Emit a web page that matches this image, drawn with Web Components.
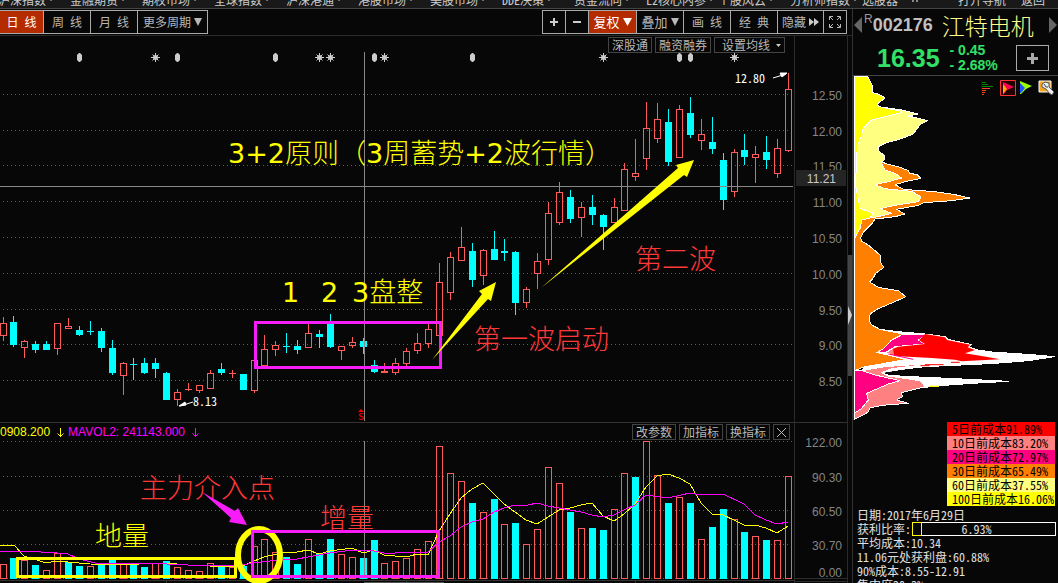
<!DOCTYPE html>
<html lang="zh-CN">
<head>
<meta charset="utf-8">
<title>江特电机 002176</title>
<style>
  html, body { margin: 0; height: 100%; background: #070707; }
  body { font: 12px/14px "Noto Sans CJK SC", "Liberation Sans", sans-serif; font-feature-settings: "hwid"; color: #aaa; overflow: hidden; }
</style>
</head>
<body>
<stock-app></stock-app>
<script>
const define = (name, markup, ready) => customElements.define(name, class extends HTMLElement {
  connectedCallback() {
    if (this.shadowRoot) return;
    const t = document.createElement('template');
    t.innerHTML = markup;
    this.attachShadow({ mode: 'open' }).append(t.content.cloneNode(true));
    if (ready) ready(this.shadowRoot, this);
  }
});
const UP = '#ff5b5b', DOWN = '#00ffff';

/* x, kind, high, body top, body bottom, low, volume kind, volume top */
const BARS = [
[3,'r',317,323,336,341,'r',564],[13,'c',316,322,345,347,'c',558],[24,'r',340,341,348,358,'r',560],[35,'c',341,344,350,353,'c',565],
[46,'c',341,344,350,350,'r',570],[57,'r',323,323,349,355,'r',553],[68,'r',318,326,329,329,'c',562],[79,'c',326,330,335,336,'c',566],
[90,'c',321,331,332,335,'r',566],[101,'c',328,331,348,352,'c',563],[112,'c',340,348,373,375,'c',560],[123,'r',362,363,376,395,'r',564],
[133,'c',358,364,365,380,'c',564],[144,'c',358,363,373,374,'c',567],[155,'c',358,363,369,378,'r',563],[166,'c',372,373,400,400,'c',561],
[177,'r',389,392,400,406,'r',567],[188,'r',383,389,390,391,'r',570],[199,'r',385,385,391,393,'r',571],[210,'r',370,373,389,389,'r',563],
[221,'c',363,369,373,375,'c',566],[232,'r',370,373,374,378,'r',567],[243,'c',374,374,390,390,'c',566],[254,'r',360,360,391,393,'r',546],
[264,'r',335,349,366,366,'r',539],[275,'r',341,345,350,356,'r',552],[286,'c',333,346,347,353,'c',557],[297,'c',340,346,350,354,'c',564],
[308,'r',323,333,348,348,'r',539],[319,'c',330,334,337,348,'c',554],[330,'c',314,323,347,348,'c',539],[341,'r',346,346,351,360,'r',554],
[352,'r',337,342,346,348,'r',557],[363,'c',338,341,347,354,'c',558],[374,'c',360,365,372,373,'c',540],[384,'r',363,371,373,373,'r',563],
[395,'r',358,363,373,375,'r',561],[406,'r',348,351,364,367,'r',558],[417,'r',333,343,351,354,'r',549],[428,'r',323,329,344,348,'r',541],
[439,'r',263,282,336,336,'r',446],[450,'r',252,257,293,300,'r',473],[461,'r',227,247,261,261,'r',481],[472,'c',243,251,280,287,'c',503],
[483,'r',249,250,276,285,'r',512],[494,'c',231,249,260,260,'c',499],[504,'c',239,251,253,261,'r',524],[515,'c',251,252,303,315,'c',523],
[526,'r',287,289,303,308,'r',544],[537,'r',253,261,274,289,'r',529],[548,'r',202,213,260,265,'r',467],[559,'r',182,192,223,225,'r',483],
[570,'c',190,197,219,223,'c',512],[581,'r',202,207,218,237,'r',528],[592,'c',195,207,215,225,'c',528],[603,'c',214,215,227,250,'c',530],
[614,'r',198,207,223,223,'r',509],[624,'r',163,169,211,211,'r',473],[635,'r',139,173,177,181,'c',477],[646,'r',102,128,159,170,'r',441],
[657,'r',103,119,139,143,'r',475],[668,'c',109,122,162,166,'c',503],[679,'r',105,109,158,158,'r',497],[690,'c',97,113,135,138,'c',503],
[701,'r',119,134,141,150,'r',539],[712,'c',117,142,149,154,'c',527],[723,'c',153,160,200,210,'c',509],[734,'r',149,152,192,197,'r',519],
[744,'c',134,150,157,165,'c',532],[755,'r',146,154,158,183,'r',536],[766,'c',136,152,160,169,'c',540],[777,'r',139,148,174,178,'r',540],
[788,'r',73,89,151,152,'r',476]];

const box = (x, kind, top, bottom) => kind === 'c' || bottom - top < 3
  ? `<rect x="${x - 3}" y="${top}" width="7" height="${Math.max(1, bottom - top)}" fill="${kind === 'c' ? DOWN : UP}"/>`
  : `<rect x="${x - 2.5}" y="${top + .5}" width="6" height="${bottom - top - 1}" fill="none" stroke="${UP}"/>`;
const wick = (x, a, b, kind) => b > a ? `<rect x="${x}" y="${a}" width="1" height="${b - a}" fill="${kind === 'c' ? DOWN : UP}"/>` : '';
const grid = ys => ys.map(y => `<path d="M3 ${y}.5H793" stroke="#5c5c5c" stroke-dasharray="1 3"/>`).join('');
const star = x => `<g stroke="#ccc"><circle cx="${x + .5}" cy="57.5" r="2.5" fill="#ccc" stroke="none"/><path d="M${x - 4} 57.5h9M${x + .5} 53v9M${x - 2.5} 54.5l6 6M${x + 3.5} 54.5l-6 6"/></g>`;
const pill = x => `<path d="M${x} 53h1l2 2v5l-2 2h-1l-2-2v-5z" fill="#ccc"/>`;

define('price-chart', `<style>
  :host { display: block; position: relative; min-width: 0; min-height: 0; }
  svg { display: block; width: 100%; height: 100%; }
  .note { font: 300 27px "DejaVu Sans", "Noto Sans CJK SC", sans-serif; }
  .note tspan { font-weight: 400; }
  .tags { position: absolute; top: 1px; right: 9px; display: flex; gap: 3px; }
  .mark { font-size: 12px; fill: #fff; }
</style>
<svg viewBox="0 36 794 386" preserveAspectRatio="xMaxYMin meet" role="img" aria-label="K线图">
  <g shape-rendering="crispEdges">${grid([94,130,165,201,237,273,309,344,380])}</g>
  <g shape-rendering="crispEdges" id="bars"></g>
  <g id="marks"></g>
  <path d="M0 186.5H793M364.5 52V421" stroke="#888" shape-rendering="crispEdges"/>
  <rect x="255.5" y="322.5" width="185" height="45" fill="none" stroke="#f81cf8" stroke-width="3"/>
  <g fill="#ff0"><path d="M432 360L482 294 479 291 496 282 491 301 488 299z"/><path d="M541 288L678 168 676 165 694 160 687 177 684 175z"/></g>
  <g class="note" fill="#ff0"><text x="228" y="163"><tspan>3+2</tspan>原则（<tspan>3</tspan>周蓄势<tspan>+2</tspan>波行情）</text><text x="282" y="302"><tspan>1</tspan></text><text x="321" y="302"><tspan>2</tspan></text><text x="352" y="302"><tspan>3</tspan>盘整</text></g>
  <g class="note" fill="#ff3838"><text x="474" y="349">第一波启动</text><text x="635" y="269">第二波</text></g>
  <text class="mark" x="193" y="406">8.13</text><path d="M193 402l-13 4M179 406l6-4 1 3z" stroke="#fff" fill="#fff"/>
  <text class="mark" x="735" y="83">12.80</text><path d="M773 78l13-4M787 73l-7 0 2 4z" stroke="#fff" fill="#fff"/>
  <text x="358" y="420" font-size="12" fill="#f00">s</text><path d="M358 412l3-3 3 3z" fill="#f00"/>
</svg>
<div class="tags"><flat-button>深股通</flat-button><flat-button>融资融券</flat-button><flat-button caret>设置均线</flat-button></div>`, root => {
  root.getElementById('bars').innerHTML = BARS.map(([x, k, h, t, b, l]) => wick(x, h, t, k) + wick(x, b, l, k) + box(x, k, t, b)).join('');
  root.getElementById('marks').innerHTML = [79,177,275,374,472,679,690].map(pill).join('') + [155,319,330,384,603,734].map(star).join('');
});

define('volume-chart', `<style>
  :host { display: block; position: relative; min-width: 0; border-top: 1px solid #333; }
  svg.plot { display: block; width: 100%; height: 160px; }
  .bar { position: absolute; top: 1px; left: 0; right: 4px; display: flex; gap: 3px; }
  .values { flex: 1; display: flex; gap: 4px; font: 12px/16px "Liberation Sans", sans-serif; white-space: nowrap; }
  .a { color: #ff0; } .b { color: #f0f; }
  .values svg { flex: none; width: 7px; height: 16px; margin-left: 3px; }
  .note { font: 300 27px "Noto Sans CJK SC", sans-serif; }
</style>
<svg class="plot" viewBox="0 423 794 160" preserveAspectRatio="xMaxYMin meet" role="img" aria-label="成交量">
  <g shape-rendering="crispEdges">${grid([441,476,510,544,578])}</g>
  <g shape-rendering="crispEdges" id="bars"></g>
  <path d="M364.5 441V578" stroke="#888" shape-rendering="crispEdges"/>
  <path d="M0 580.5H794M166.5 581v2M406.5 581v2M635.5 581v2" stroke="#333"/><path d="M364 582.5h80" stroke="#555"/>
  <g fill="none" shape-rendering="crispEdges">
  <polyline stroke="#ff0" points="0,545 14,545 24,556 46,563 57,561 68,562 90,564 128,565 150,563 165,563 188,565 210,566 232,567 243,566 254,561 264,557 286,552 297,552 308,550 319,554 330,551 352,548 363,553 374,550 384,555 395,556 410,556 417,554 428,555 439,531 450,514 461,498 472,489 483,483 494,494 504,504 515,512 526,520 537,524 548,517 559,510 570,508 581,505 592,503 603,516 614,521 624,514 635,504 646,487 657,476 668,474 679,478 690,484 701,503 712,514 723,515 734,520 744,525 755,525 766,528 777,533 788,526"/>
  <polyline stroke="#f0f" points="0,552 24,551 57,553 68,554 79,559 95,563 145,563 188,565 210,565 235,566 254,563 286,559 297,559 308,557 330,553 352,550 374,551 384,553 395,553 406,552 417,553 428,552 439,542 450,536 461,527 472,522 483,519 494,512 504,508 515,505 528,505 537,503 548,506 559,508 570,510 581,512 592,515 603,517 614,515 624,510 635,505 646,495 668,498 690,493 701,495 723,494 744,504 755,515 766,520 777,524 788,522"/></g>
  <g class="note" fill="#ff3838"><text x="140" y="498">主力介入点</text><text x="320" y="528">增量</text></g>
  <text class="note" fill="#ff0" x="95" y="546">地量</text>
  <rect x="17.5" y="558.5" width="218" height="18" fill="none" stroke="#ff0" stroke-width="3"/>
  <ellipse cx="259" cy="555" rx="21" ry="26" fill="none" stroke="#ff0" stroke-width="6"/>
  <rect x="252.5" y="531.5" width="186" height="45" fill="none" stroke="#f81cf8" stroke-width="3"/>
  <path d="M202 492L235 511 238 508 247 525 229 522 231 518z" fill="#f81cf8"/>
</svg>
<div class="bar">
  <div class="values"><span class="a">0908.200</span><svg viewBox="0 0 7 16"><path d="M3.5 4v9M.5 9.5l3 3 3-3" fill="none" stroke="#ff0"/></svg>
  <span class="b">MAVOL2: 241143.000</span><svg viewBox="0 0 7 16"><path d="M3.5 4v9M.5 9.5l3 3 3-3" fill="none" stroke="#f0f"/></svg></div>
  <flat-button>改参数</flat-button><flat-button>加指标</flat-button><flat-button>换指标</flat-button><flat-button close></flat-button>
</div>`, root => {
  root.getElementById('bars').innerHTML = BARS.map(b => box(b[0], b[6], b[7], 579)).join('');
});

define('flat-button', `<style>
  :host { display: block; }
  button { display: flex; align-items: center; gap: 6px; box-sizing: border-box; height: 16px; margin: 0; padding: 0 3px; border: 1px solid #444; background: #070707; color: #b8b8b8; font: inherit; font-feature-settings: inherit; line-height: 14px; white-space: nowrap; }
  :host([close]) button { padding: 0 2px; }
  :host([caret]) button { padding: 0 3px 0 7px; }
</style><button type="button"><slot></slot></button>`, (root, host) => {
  const b = root.querySelector('button');
  if (host.hasAttribute('close')) { b.setAttribute('aria-label', '关闭'); b.innerHTML = '<svg width="11" height="11" viewBox="0 0 11 11"><path d="M1 1l9 9M10 1l-9 9" stroke="#b8b8b8"/></svg>'; }
  if (host.hasAttribute('caret')) b.insertAdjacentHTML('beforeend', '<svg width="5" height="3" viewBox="0 0 5 3"><path d="M0 0h5L2.500 3z" fill="#ccc"/></svg>');
});

define('tool-button', `<style>
  :host { display: block; }
  button { display: flex; align-items: center; justify-content: center; gap: 3px; box-sizing: border-box; width: 100%; height: 24px; margin: 0; padding: 0; border: 1px solid #aaa; background: #070707; color: #b8b8b8; font: inherit; font-feature-settings: inherit; line-height: 18px; white-space: pre; }
  :host([active]) button { background: #b52b00; color: #fff; }
</style><button type="button"><slot></slot><slot name="icon"></slot></button>`, (root, host) => {
  if (host.hasAttribute('label')) root.querySelector('button').setAttribute('aria-label', host.getAttribute('label'));
});

define('tool-bar', `<style>
  :host { display: flex; justify-content: space-between; box-sizing: border-box; height: 27px; padding: 1px 6px 0 0; border-bottom: 1px solid #2c2c2c; }
  div { display: flex; }
  tool-button { width: 48px; margin-left: -1px; }
  .first { width: 45px; }
  .sm { width: 24px; } .lg { width: 71px; } .wide { width: 47px; }
  .big { font-size: 13px; } .adj { width: 49px; }
  svg { display: block; }
</style>
<div><tool-button class="first" active>日 线</tool-button><tool-button>周 线</tool-button><tool-button>月 线</tool-button><tool-button class="lg">更多周期<svg slot="icon" width="8" height="8"><path d="M0 0h8L4 8z" fill="#b8b8b8"/></svg></tool-button></div>
<div><tool-button class="sm" label="放大"><svg slot="icon" width="8" height="8"><path d="M4 0v8M0 4h8" stroke="#ccc" stroke-width="2"/></svg></tool-button>
<tool-button class="sm" label="缩小"><svg slot="icon" width="8" height="8"><path d="M0 4h8" stroke="#ccc" stroke-width="2"/></svg></tool-button>
<tool-button class="big adj" active>复权<svg slot="icon" width="9" height="8"><path d="M0 0h9L4.500 8z" fill="#fff"/></svg></tool-button>
<tool-button class="big">叠加<svg slot="icon" width="8" height="8"><path d="M0 0h8L4 8z" fill="#b8b8b8"/></svg></tool-button>
<tool-button>画 线</tool-button><tool-button>经 典</tool-button>
<tool-button class="wide">隐藏<svg slot="icon" width="10" height="8"><path d="M0 0l5 4-5 4zM5 0l5 4-5 4z" fill="#ccc"/></svg></tool-button>
<tool-button class="sm" label="全屏"><svg slot="icon" width="12" height="12"><path d="M.5 4V.5H4M8 .5h3.500V4M11.500 8v3.500H8M4 11.500H.5V8M1 1l3 3M11 1L8 4M11 11L8 8M1 11l3-3" fill="none" stroke="#bbb"/></svg></tool-button></div>`);

define('menu-bar', `<style>
  :host { display: flex; justify-content: space-between; align-items: flex-end; box-sizing: border-box; height: 9px; overflow: hidden; background: #191919; border-bottom: 1px solid #444; padding-bottom: 1px; }
  nav { display: flex; white-space: nowrap; margin-left: -2px; }
  nav.end { gap: 15px; margin-right: 13px; }
  nav.main a { width: 72px; }
  nav.main a::after { content: ""; display: inline-block; margin-left: 2px; vertical-align: 4px; border: 3px solid transparent; border-top-color: #ccc; border-bottom: 0; }
  nav.main a:last-of-type { width: 36px; }
  nav.main a:last-of-type::after { display: none; }
  a { color: #ccc; text-decoration: none; line-height: 14px; flex: none; }
  i { align-self: flex-start; margin: 6px 0 0 14px; width: 2px; height: 3px; background: #888; box-shadow: 4px 0 #888; }
</style>
<nav class="main"></nav><nav class="end"><a href="#nav">打开导航</a><a href="#back">返回</a></nav>`, root => {
  root.querySelector('.main').innerHTML = '沪深指数 金融期货 期权市场 全球指数 沪深港通 港股市场 美股市场 DDE决策 资金流向 L2核心内参 个股风云 分析师指数 选股器'.split(' ').map((t, i) => `<a href="#m${i}">${t}</a>`).join('');
  root.querySelector('.main').insertAdjacentHTML('beforeend', '<i></i>');
});

define('value-axis', `<style>
  :host { display: block; min-height: 0; border-left: 1px solid #2a2a2a; border-right: 1px solid #2a2a2a; }
  :host([framed]) { border-top: 1px solid #333; }
  svg { display: block; width: 100%; height: 100%; }
  text { font: 12px "Liberation Sans", sans-serif; text-anchor: end; fill: #858585; }
</style><svg preserveAspectRatio="xMinYMin meet"></svg>`, (root, host) => {
  const s = root.querySelector('svg'), top = +host.getAttribute('top');
  s.setAttribute('viewBox', `795 ${top} 52 ${host.getAttribute('span')}`);
  s.innerHTML = host.getAttribute('values').split(' ').map(v => { const [t, y] = v.split('@'); return `<text x="842" y="${+y + 5}">${t}</text>`; }).join('')
    + (host.hasAttribute('cursor') ? `<rect x="796" y="170" width="50" height="16" fill="#242424"/><text x="836" y="183" style="fill:#c8c8c8">${host.getAttribute('cursor')}</text>` : '<path d="M795 578.5h52M795 581.500h52" stroke="#2c2c2c"/>');
});

define('side-handle', `<style>
  :host { display: block; }
  svg { display: block; }
</style><svg width="5" height="547" viewBox="848 36 5 547"><rect x="848" y="255" width="5" height="121" fill="#444"/><path d="M848 306l4 9-4 10z" fill="#ccc"/></svg>`);

define('quote-head', `<style>
  :host { display: grid; grid-template-rows: 32px 34px; box-sizing: border-box; height: 67px; border-bottom: 1px solid #444; }
  .name { display: flex; align-items: center; padding: 0 1px; color: #c0c0c0; }
  .name svg { flex: none; }
  sup { font: 12px/12px "Liberation Sans", sans-serif; align-self: flex-start; margin: 4px 0 0 2px; color: #999; }
  .code { font: bold 18px/32px "Liberation Sans", sans-serif; }
  .title { flex: 1; margin-left: 9px; font-size: 23px; line-height: 32px; font-weight: 300; color: #ffff8c; }
  .price { display: flex; align-items: center; padding: 0 9px 0 24px; color: #33e066; font-family: "Liberation Sans", sans-serif; font-weight: bold; }
  .last { font-size: 25px; line-height: 32px; margin-right: 10px; }
  .delta { flex: 1; font-size: 14px; line-height: 15px; white-space: pre; font-feature-settings: normal; }
  .delta span { display: block; }
  button { width: 33px; height: 26px; padding: 0; border: 1px solid #aaa; background: #070707; display: grid; place-items: center; }
</style>
<div class="name"><svg width="8" height="16"><path d="M8 0v16L0 8z" fill="#666"/></svg><sup>R</sup><span class="code">002176</span><span class="title">江特电机</span><svg width="8" height="16"><path d="M0 0v16l8-8z" fill="#666"/></svg></div>
<div class="price"><span class="last">16.35</span><div class="delta"><span>- 0.45</span><span>- 2.68%</span></div><button type="button" aria-label="加自选"><svg width="11" height="11"><path d="M5.500 0v11M0 5.500h11" stroke="#aaa" stroke-width="3"/></svg></button></div>`);

define('chip-chart', `<style>
  :host { display: block; position: relative; }
  svg.plot { display: block; width: 100%; height: 344px; }
  .tools { position: absolute; top: 4px; right: 4px; display: flex; gap: 3px; }
  .tools button { width: 16px; height: 16px; padding: 0; border: 0; background: none; }
  .tools svg { display: block; }
</style>
<svg class="plot" viewBox="24 228 615 1032" preserveAspectRatio="xMinYMin meet" role="img" aria-label="筹码分布">
 <g stroke="#fff" stroke-width="3" stroke-linejoin="round" shape-rendering="crispEdges">
  <path fill="#ff8000" d="M28 484H108L125 492 165 502 190 512 195 520 216 524 228 535 185 544 150 554 175 568 270 575 330 584 374 594 320 602 235 608 220 616 155 628 165 634 180 642 150 650 90 657 80 672 55 696 47 712 50 724 70 735 105 765 108 790 117 802 92 820 84 835 74 846 100 862 160 872 182 890 150 905 95 928 76 942 72 960 80 975 105 988 150 1000 170 1040 180 1078 60 1100 28 1112z"/>
  <path fill="#ffff80" d="M28 325L102 320 170 330 220 342 190 348 248 362 225 374 205 402 170 416 125 428 100 440 102 454 118 466 118 480 108 486 120 510 150 520 170 534 130 545 90 554 120 566 200 574 228 590 220 605 150 616 105 626 120 632 140 640 90 652 28 660z"/>
  <path fill="#ff0" d="M28 228H66L74 240 82 256 84 278 104 284 120 294 110 302 96 312 102 320 170 334 170 338 130 348 80 360 55 384 48 410 38 435 34 480 32 560 40 600 45 625 85 640 75 654 50 660 46 684 28 716z"/>
  <path fill="#fff" d="M105 988L160 995 240 1002 300 1010 308 1018 380 1034 370 1040 398 1050 440 1056 560 1064 629 1070 550 1082 450 1090 370 1094 240 1100 170 1108 110 1118 130 1126 200 1130 330 1136 490 1144 380 1150 300 1156 240 1162 50 1112 60 1100 180 1078 95 1058 140 1020z"/>
  <path fill="#ff8000" stroke="none" d="M80 984L170 1003 142 1020 112 1048 92 1058 176 1078 100 1092 60 1098 40 1098z"/>
  <path fill="#ff8080" d="M145 1044L122 1058 150 1068 345 1080 320 1086 120 1100 50 1112 28 1112V1258L45 1250 70 1236 75 1224 110 1216 190 1210 155 1200 172 1190 170 1178 240 1160 225 1142 170 1134 130 1128 110 1118 140 1106 240 1094 345 1084 250 1074z"/>
  <path fill="#ff0080" d="M175 1002L235 1002 240 1008 220 1020 238 1032 150 1040 120 1058 95 1058 115 1046 140 1020z"/>
  <path fill="#ff0080" d="M28 1112H52L90 1125 165 1142 130 1152 65 1180 70 1200 50 1225 28 1240z"/>
 </g>
 <path fill="#070707" d="M118 1118L180 1109 250 1103 270 1103 200 1112 180 1127 130 1122z"/>
 <path fill="#f00" d="M240 1002L300 1012 306 1020 376 1034 368 1042 390 1050 360 1060 410 1068 465 1078 350 1084 330 1079 260 1074 148 1068 144 1046 160 1040 240 1032 222 1021z"/>
 <path d="M130 1062L205 1078" stroke="#ff0080" stroke-width="3"/><path d="M226 1097h28M240 1094h56M318 1087h26" stroke="#f00" stroke-width="3"/>
 <path d="M252 1159h30" stroke="#ff0" stroke-width="4"/><path d="M28 228V1260" stroke="#fff" stroke-width="3"/>
</svg>
<div class="tools">
 <button type="button" aria-label="筹码"><svg width="16" height="16"><path d="M.5 1v13" stroke="#00a"/><path d="M1 2.500h4M1 4.500h6M1 6.500h11" stroke="#080"/><path d="M1 8.500h8M1 10.500h4M1 12.500h3M1 14.500h2" stroke="#f42"/></svg></button>
 <button type="button" aria-label="火焰山"><svg width="16" height="16"><path d="M.5.5h15v15H.5z" fill="#200" stroke="#f33"/><path d="M3 2l11 5-7 3-4 5z" fill="#ff0050"/><path d="M3 4l4 5-4 5z" fill="#fa0"/></svg></button>
 <button type="button" aria-label="活跃度"><svg width="16" height="16"><path d="M1 1l12 5-6 3-5 5H1z" fill="#9f0"/><path d="M1 3l5 5-4 5H1z" fill="#25f"/></svg></button>
 <button type="button" aria-label="设置"><svg width="16" height="16"><path d="M1 1h12v11H1z" fill="#f7a51c" stroke="#fff"/><path d="M4 4l3-2 4 1v4l5 5-2 3-3-2-3-4-4-2z" fill="#eee" stroke="#555"/><path d="M6 4l2 3h2" stroke="#444" fill="none"/></svg></button>
</div>`);

define('cost-legend', `<style>
  :host { display: block; width: 108px; margin: 2px 3px 0 auto; color: #000; }
  ul { margin: 0; padding: 0; list-style: none; }
  li { height: 14px; padding-left: 5px; white-space: nowrap; overflow: hidden; }
</style><ul><li style="background:#f00">5日前成本91.89%</li><li style="background:#ff8080">10日前成本83.20%</li><li style="background:#ff0080">20日前成本72.97%</li><li style="background:#ff8000">30日前成本65.49%</li><li style="background:#ffff80">60日前成本37.55%</li><li style="background:#ff0">100日前成本16.06%</li></ul>`);

define('chip-stats', `<style>
  :host { display: block; padding: 2px 2px 0 4px; color: #e0e0e0; }
  p { margin: 0; white-space: nowrap; }
  .rate { display: flex; gap: 1px; }
  .meter { flex: 1; display: flex; box-sizing: border-box; height: 14px; border: 1px solid #fff; line-height: 12px; }
  .meter i { box-sizing: border-box; border: 1px solid #ff0; margin: -1px 0 -1px -1px; width: 10px; }
  .meter span { flex: 1; text-align: center; padding-right: 24px; }
</style><p>日期:2017年6月29日</p><div class="rate">获利比率:<div class="meter"><i></i><span>6.93%</span></div></div><p>平均成本:10.34</p><p>11.06元处获利盘:60.88%</p><p>90%成本:8.55-12.91</p><p>集中度20.3%</p>`);

define('stock-app', `<style>
  :host { display: grid; grid-template-rows: 9px minmax(0, 1fr); height: 100vh; overflow: hidden; }
  main { display: grid; grid-template-columns: minmax(0, 1fr) 205px; min-height: 0; }
  .left { display: grid; grid-template: 27px minmax(0, 1fr) 161px / minmax(0, 1fr) 54px 5px; min-height: 0; }
  tool-bar { grid-column: 1 / -1; }
  side-handle { grid-area: 2 / 3 / 4 / 4; overflow: hidden; }
  aside { overflow: hidden; border-left: 1px solid #333; margin-left: -1px; min-height: 0; }
</style>
<menu-bar></menu-bar>
<main><div class="left"><tool-bar></tool-bar>
<price-chart></price-chart><value-axis top="36" span="386" cursor="11.21" values="12.50@95 12.00@131 11.50@166 11.00@202 10.50@238 10.00@274 9.50@310 9.00@345 8.50@381"></value-axis>
<volume-chart></volume-chart><value-axis framed top="423" span="160" values="122.00@442 90.30@477 60.50@511 30.70@545 0.00@572"></value-axis>
<side-handle></side-handle></div>
<aside><quote-head></quote-head><chip-chart></chip-chart><cost-legend></cost-legend><chip-stats></chip-stats></aside></main>`);
</script>
</body>
</html>
